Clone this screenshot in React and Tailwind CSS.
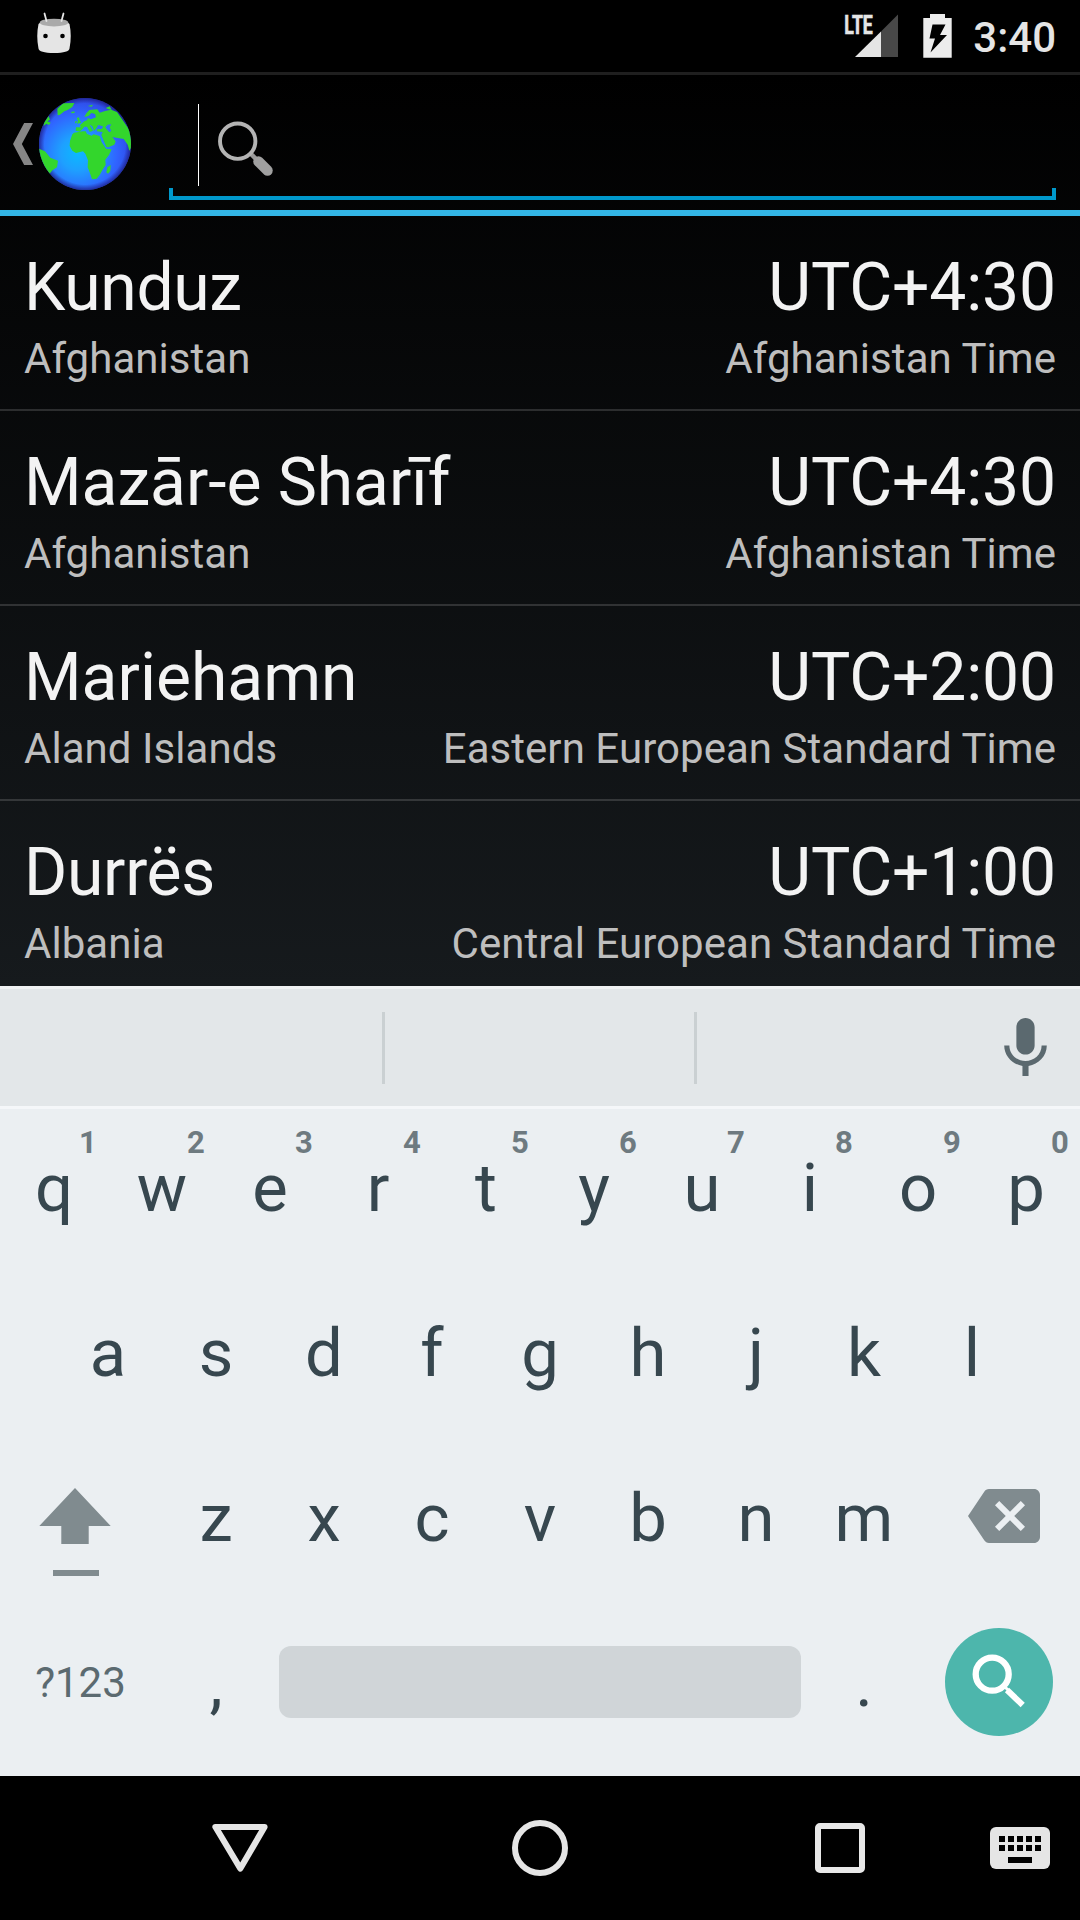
const cities = [
  { city: 'Kunduz', country: 'Afghanistan', offset: 'UTC+4:30', zone: 'Afghanistan Time', tracking: 'tracking-[-0.35px]' },
  { city: 'Mazār-e Sharīf', country: 'Afghanistan', offset: 'UTC+4:30', zone: 'Afghanistan Time', tracking: 'tracking-[-0.06px]' },
  { city: 'Mariehamn', country: 'Aland Islands', offset: 'UTC+2:00', zone: 'Eastern European Standard Time', tracking: 'tracking-normal' },
  { city: 'Durrës', country: 'Albania', offset: 'UTC+1:00', zone: 'Central European Standard Time', tracking: 'tracking-[-0.3px]' },
];

const topRow = [...'qwertyuiop'].map((k, i) => ({ k, hint: String((i + 1) % 10) }));

function StatusBar() {
  return (
    <header className="flex h-[75px] shrink-0 items-start border-b-[3px] border-[#1f1f1f] bg-black text-[#e5e5e5]">
      <svg className="ml-[36px] mt-[12px] h-[42px] w-[36px]" viewBox="36 12 36 42">
        <path d="M38.500 24 Q40 22 44 21 H64 Q68 22 69.500 24 Q72 36 69.500 48.500 Q69 52.800 54 53 Q39 52.800 38.500 48.500 Q36 36 38.500 24Z" fill="#e5e5e5" />
        <ellipse cx="54" cy="22.600" rx="14.300" ry="3.900" fill="#aaa" />
        <path d="M44.500 13.500 L46.500 21 M63.500 13.500 L61.500 21" stroke="#e5e5e5" strokeWidth="1.800" strokeLinecap="round" />
        <circle cx="45.500" cy="36" r="2.300" fill="#000" />
        <circle cx="62.500" cy="36" r="2.300" fill="#000" />
      </svg>
      <svg className="ml-auto h-[60px] w-[56px]" viewBox="844 0 56 60">
        <text x="844.300" y="33.700" fontFamily="Roboto" fontWeight="700" fontSize="26" textLength="28.500" lengthAdjust="spacingAndGlyphs" fill="#e5e5e5" stroke="#e5e5e5" strokeWidth="0.700">LTE</text>
        <path d="M881 31.500 L898 14.500 V57 H881Z" fill="#484848" />
        <path d="M855 57 L881 31.500 V57Z" fill="#e5e5e5" />
      </svg>
      <svg className="ml-[20px] h-[60px] w-[36px]" viewBox="920 0 36 60">
        <path d="M923.300 18 H930 V14 H945 V18 H951.700 V57.700 H923.300Z" fill="#ececec" />
        <path d="M932.500 24.500 H945.500 L940 35 H947 L930.500 52.500 L935 38.500 H929.500Z" fill="#000" />
      </svg>
      <span className="ml-[17px] mr-[24px] pt-[14px] text-[42px] font-medium leading-[48px]">3:40</span>
    </header>
  );
}

function Globe() {
  return (
    <svg className="h-[96px] w-[96px]" viewBox="0 0 288 288">
      <defs>
        <radialGradient id="ocean" cx="0.42" cy="0.6" r="0.66">
          <stop offset="0" stopColor="#0bb9ff" />
          <stop offset="0.28" stopColor="#1ea0ff" />
          <stop offset="0.65" stopColor="#3064ff" />
          <stop offset="0.9" stopColor="#2f49e4" />
          <stop offset="1" stopColor="#2734b0" />
        </radialGradient>
        <radialGradient id="rim">
          <stop offset="0.88" stopColor="#1c1c80" stopOpacity="0" />
          <stop offset="1" stopColor="#1c1c80" stopOpacity="0.75" />
        </radialGradient>
        <clipPath id="disc"><circle cx="144" cy="144" r="138" /></clipPath>
      </defs>
      <circle cx="144" cy="144" r="138" fill="url(#ocean)" />
      <circle cx="144" cy="144" r="138" fill="url(#rim)" />
      <g clipPath="url(#disc)" fill="#33d62c">
        <path d="M62 58 L61 38 L78 22 L112 21 L106 33 L92 42 L82 46 L68 57Z" />
        <path d="M102 48 L112 46 L113 51 L104 52Z M152 30 L168 26 L164 32Z M206 36 L218 31 L224 42 L214 40Z" />
        <path d="M35 60 L39 71 L31 76 L41 80 L36 87 L28 83 L20 90 L22 78Z" />
        <path d="M5 158 L24 166 L40 185 L63 194 L60 214 L46 223 L38 233 L20 218 L5 190Z" />
        <path d="M119 66 L126 64 L128 73 L133 80 L120 83 L123 74Z M115 76 L120 75 L118 81 L114 82Z" />
        <path d="M142 63 L148 52 L157 42 L181 40 L188 50 L204 45 L222 41 L240 48 L284 112 L283 154 L277 164 L272 146 L260 129 L238 125 L226 123 L236 136 L232 146 L214 154 L208 153 L193 117 L197 108 L179 106 L181 98 L192 97 L198 93 L184 89 L177 98 L171 105 L166 91 L158 86 L168 104 L158 108 L150 92 L142 92 L136 100 L128 107 L116 104 L117 94 L131 94 L129 87 L142 76 L151 72 L152 66 L162 70 L177 64 L174 54 L163 51 L155 60Z" />
        <path d="M111 110 L137 106 L146 106 L150 114 L164 119 L170 115 L188 120 L194 139 L208 159 L224 160 L216 177 L205 191 L206 207 L198 219 L188 237 L179 248 L165 250 L158 229 L152 214 L153 193 L145 173 L138 166 L117 171 L106 164 L98 150 L99 135 L106 115Z" />
        <path d="M211 214 L221 207 L220 225 L213 233 L208 229Z" />
      </g>
      <path clipPath="url(#disc)" d="M205 94 L212 86 L223 85 L218 94 L223 105 L217 109 L211 102Z M183 87 L198 91 L194 99 L180 99Z" fill="#2f73f5" />
    </svg>
  );
}

function ActionBar() {
  return (
    <div className="flex h-[141px] shrink-0 items-start border-b-[6px] border-[#33b5e5]">
      <svg className="ml-[13px] mt-[48px] h-[42px] w-[20px]" viewBox="39 369 61 126" preserveAspectRatio="none">
        <path d="M73 369 H100 L66 432 L100 495 H73 L39 432Z" fill="#868686" />
      </svg>
      <div className="ml-[4px] mt-[21px]"><Globe /></div>
      <div className="ml-[36px] mr-[24px] mt-[29px] flex h-[96px] flex-1 flex-col">
        <div className="flex h-[84px] items-start">
          <i className="ml-[29px] h-[82px] w-px bg-white" />
          <svg className="ml-[17px] mt-[14px] h-[60px] w-[60px]" viewBox="215 118 60 60">
            <path d="M249.500 153.500 L256 160" stroke="#999" strokeWidth="4.500" />
            <path d="M256.800 160.800 L267.200 171.200" stroke="#a0a0a0" strokeWidth="8.500" />
            <path d="M257.500 161.500 L266.500 170.500" stroke="#a0a0a0" strokeWidth="10.500" strokeLinecap="round" />
            <circle cx="236.700" cy="141.200" r="17.700" fill="none" stroke="#b4b4b4" strokeWidth="3.900" />
          </svg>
        </div>
        <div className="h-[12px] border-x-[4px] border-b-[4px] border-[#0099cc]" />
      </div>
    </div>
  );
}

function CityRow({ city, country, offset, zone, tracking }) {
  return (
    <li className="h-[195px] shrink-0 border-b-2 border-white/15 px-[24px] pt-[33px]">
      <div className="flex justify-between text-[66px] leading-[78px] text-[#f3f3f3]">
        <span className={tracking}>{city}</span>
        <span className="tracking-[-0.15px]">{offset}</span>
      </div>
      <div className="flex justify-between pt-[8px] text-[42px] leading-[48px] tracking-[0.05px] text-[#bebebe]">
        <span>{country}</span>
        <span>{zone}</span>
      </div>
    </li>
  );
}

function Key({ k, hint }) {
  return (
    <div className="relative h-[165px] w-[108px] text-center text-[67px] leading-[78px] text-[#37474f]">
      <span className="block pt-[40px]">{k}</span>
      {hint && (
        <span className="absolute left-[68px] top-[16px] w-[40px] text-center text-[31px] font-bold leading-[36px] text-[#6e7a80]">{hint}</span>
      )}
    </div>
  );
}

function Keyboard() {
  return (
    <section className="h-[790px] shrink-0 bg-[#ebeff2]">
      <div className="flex h-[123px] items-start border-y-[3px] border-b-[#f5f7f9] border-t-[#f0f2f3] bg-[#e3e7e9]">
        <i className="ml-[382px] mt-[23px] h-[72px] w-[3px] bg-[#cad0d2]" />
        <i className="ml-[309px] mt-[23px] h-[72px] w-[3px] bg-[#cad0d2]" />
        <svg className="ml-auto mr-[18px] mt-[23px] h-[73px] w-[73px]" viewBox="0 0 24 24" fill="#5b696f">
          <path d="M12 14c1.660 0 3-1.340 3-3V5c0-1.660-1.340-3-3-3S9 3.340 9 5v6c0 1.660 1.340 3 3 3zm5.300-3c0 3-2.540 5.100-5.300 5.100S6.700 14 6.700 11H5c0 3.410 2.720 6.230 6 6.720V21h2v-3.280c3.280-.48 6-3.300 6-6.720h-1.700z" />
        </svg>
      </div>
      <div className="flex">{topRow.map((p) => <Key key={p.k} {...p} />)}</div>
      <div className="flex justify-center">{[...'asdfghjkl'].map((k) => <Key key={k} k={k} />)}</div>
      <div className="flex">
        <div className="w-[162px]">
          <svg className="ml-[36px] mt-[47px] h-[90px] w-[78px]" viewBox="36 1486 78 90" fill="#808b8f">
            <path d="M75 1488 L110.700 1526 H88.700 V1544 H61.300 V1526 H39.300Z" />
            <path d="M53 1570 H99 V1576 H53Z" />
          </svg>
        </div>
        {[...'zxcvbnm'].map((k) => <Key key={k} k={k} />)}
        <svg className="ml-[50px] mt-[41px] h-[72px] w-[72px]" viewBox="0 0 24 24" fill="#808b8f">
          <path d="M22 3H7c-.69 0-1.230.35-1.590.88L0 12l5.410 8.110c.36.53.9.89 1.590.89h15c1.100 0 2-.9 2-2V5c0-1.100-.9-2-2-2zm-3 12.590L17.590 17 14 13.410 10.410 17 9 15.590 12.590 12 9 8.410 10.410 7 14 10.590 17.590 7 19 8.410 15.410 12 19 15.590z" />
        </svg>
      </div>
      <div className="flex items-start">
        <span className="w-[162px] pr-[1px] pt-[55px] text-center text-[42px] leading-[48px] text-[#5b6a70]">?123</span>
        <Key k="," />
        <div className="ml-[9px] mr-[9px] mt-[42px] h-[72px] w-[522px] rounded-xl bg-[#d0d5d8]" />
        <Key k="." />
        <div className="ml-[27px] mt-[24px] h-[108px] w-[108px] rounded-full bg-[#4db6ac]">
          <svg className="h-[108px] w-[108px]" viewBox="945 1628 108 108" fill="none" stroke="#fff">
            <circle cx="992.200" cy="1674.200" r="16.500" strokeWidth="6.300" />
            <path d="M1003 1685 L1008 1690" strokeWidth="3" />
            <path d="M1007 1690 L1022.700 1705" strokeWidth="6" />
          </svg>
        </div>
      </div>
    </section>
  );
}

function NavBar() {
  return (
    <nav className="flex h-[144px] shrink-0 items-center bg-black">
      <svg className="ml-[204px] h-[72px] w-[72px]" viewBox="204 1812 72 72">
        <path d="M215.500 1827 H264.500 L240.300 1868.500Z" fill="none" stroke="#e5e5e5" strokeWidth="6.200" strokeLinejoin="round" />
      </svg>
      <i className="ml-[236px] h-[56px] w-[56px] rounded-full border-[6px] border-[#e5e5e5]" />
      <i className="ml-[247px] h-[50px] w-[50px] rounded-[5px] border-[6px] border-[#e8e8e8]" />
      <svg className="ml-[125px] h-[42px] w-[60px]" viewBox="0 0 60 42">
        <rect width="60" height="42" rx="6" fill="#e5e5e5" />
        {[9, 18].map((y) => [9, 18, 27, 36, 45].map((x) => <rect key={`${x}-${y}`} x={x} y={y} width="6" height="6" />))}
        <rect x="18" y="30" width="24" height="6" />
      </svg>
    </nav>
  );
}

export default function App() {
  return (
    <div className="flex h-[1920px] w-[1080px] flex-col overflow-hidden bg-black font-['Roboto',sans-serif]">
      <StatusBar />
      <main className="flex h-[911px] shrink-0 flex-col overflow-hidden bg-linear-to-b/srgb from-black to-[#161a1d]">
        <ActionBar />
        <ul className="flex flex-col">{cities.map((c) => <CityRow key={c.city} {...c} />)}</ul>
      </main>
      <Keyboard />
      <NavBar />
    </div>
  );
}
